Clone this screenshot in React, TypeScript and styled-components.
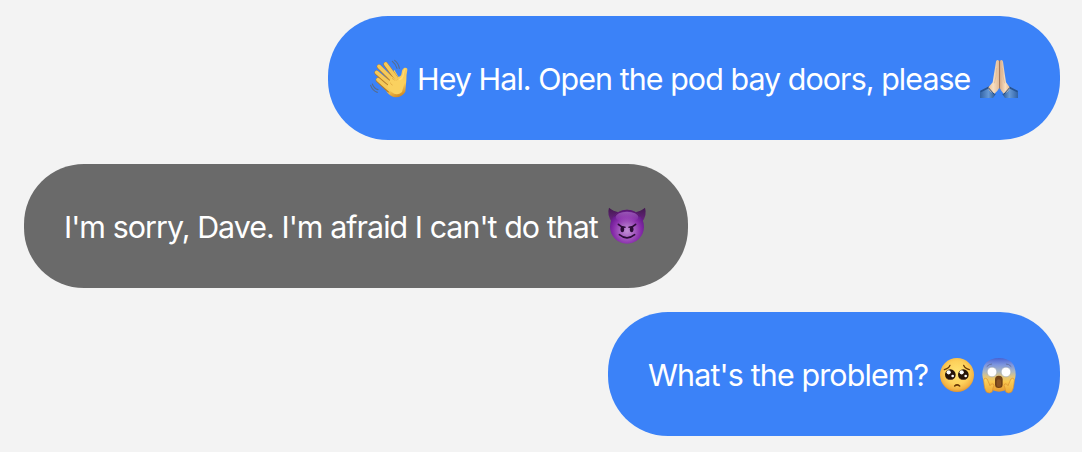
import React from "react";
import styled, { createGlobalStyle } from "styled-components";

const GlobalStyle = createGlobalStyle`
  * { box-sizing: border-box; }
  body { margin: 0; background: #f3f3f3; }
`;

const Conversation = styled.main`
  display: flex;
  flex-direction: column;
  gap: 24px;
  min-height: 452px;
  padding: 16px 22px 16px 24px;
  font-family: Inter, "Liberation Sans", sans-serif;
`;

const Bubble = styled.div<{ $sent?: boolean; $width: number }>`
  display: flex;
  align-items: center;
  justify-content: space-between;
  align-self: ${(p) => (p.$sent ? "flex-end" : "flex-start")};
  width: ${(p) => p.$width}px;
  height: 124px;
  padding: 0 40px;
  border-radius: 60px;
  background: ${(p) => (p.$sent ? "#3b82f8" : "#6a6a6a")};
  color: #fff;
`;

const Message = styled.span<{ $tracking: number }>`
  flex: 1;
  min-width: 0;
  padding-top: 2px;
  font-size: 30.4px;
  line-height: 40px;
  letter-spacing: ${(p) => p.$tracking}px;
  white-space: nowrap;
`;

const Emoji = styled.svg`
  display: block;
  flex: none;
  width: 42px;
  height: 42px;
`;

const LeadingEmoji = styled(Emoji)`
  margin-right: 7px;
`;

const Wave = () => (
  <LeadingEmoji viewBox="18 15 126 126" role="img" aria-label="waving hand">
    <defs>
      <linearGradient id="skin" gradientUnits="userSpaceOnUse" x1="60" y1="35" x2="105" y2="136">
        <stop offset="0" stopColor="#f3c557" />
        <stop offset=".72" stopColor="#fbcf5c" />
        <stop offset="1" stopColor="#d18a24" />
      </linearGradient>
    </defs>
    <g fill="none" stroke="#566c8d" strokeWidth="3.4" strokeLinecap="round">
      <path d="M91 28Q101 36 105 49M98 25Q110 34 112 49M31 96Q36 110 48 113M26 100Q32 117 46 121" />
    </g>
    <path d="M66 105L97 53L109 74Q118 74 119 62Q120 50 128 47Q137 46 136 54Q133 67 133 84L130 119Q121 135 101 136Q87 135 77 123Z" fill="url(#skin)" />
    <g fill="none" strokeLinecap="round">
      <path d="M71 37L101 78M51 44L88 82M44 62L80 94M48 84L80 114" stroke="#b97c24" strokeWidth="14" />
      <path d="M71 36L103 79M51 43L91 83M44 61L85 96M48 83L84 114" stroke="#f5c95a" strokeWidth="11" />
    </g>
    <path d="M88 74L106 87L121 73L127 94L120 120Q104 134 88 119L75 105Z" fill="#fad15f" />
    <path d="M84 92Q89 96 91 100M90 79Q96 82 99 86" fill="none" stroke="#dca03a" strokeWidth="2" />
    <path d="M129 51Q124 59 123 72Q121 79 113 83" fill="none" stroke="#ffdb74" strokeWidth="4" strokeLinecap="round" />
  </LeadingEmoji>
);

const Pray = () => (
  <Emoji viewBox="24 15 126 126" role="img" aria-label="folded hands">
    <defs>
      <linearGradient id="handLeft"><stop stopColor="#e9b887" /><stop offset=".45" stopColor="#f8dfc3" /><stop offset="1" stopColor="#e2ba95" /></linearGradient>
      <linearGradient id="handRight"><stop stopColor="#d6a983" /><stop offset=".55" stopColor="#f8dfc3" /><stop offset="1" stopColor="#e9b98a" /></linearGradient>
      <linearGradient id="cuffLeft"><stop stopColor="#3162a5" /><stop offset=".55" stopColor="#6699d6" /><stop offset="1" stopColor="#285591" /></linearGradient>
      <linearGradient id="cuffRight"><stop stopColor="#285591" /><stop offset=".45" stopColor="#6699d6" /><stop offset="1" stopColor="#3162a5" /></linearGradient>
    </defs>
    <path d="M30 117L56 103L77 127L69 138H30Z" fill="url(#cuffLeft)" />
    <path d="M144 117L118 103L97 127L105 138H144Z" fill="url(#cuffRight)" />
    <path d="M30 117L57 103L60 107L33 121Z" fill="#245293" />
    <path d="M144 117L117 103L114 107L141 121Z" fill="#245293" />
    <path d="M78 29Q79 23 84 24L88 28V107Q84 116 73 125Q59 120 54 107L68 91Q72 65 78 29Z" fill="url(#handLeft)" />
    <path d="M99 29Q98 23 93 24L89 28V107Q93 116 101 125Q115 120 120 107L108 91Q104 65 99 29Z" fill="url(#handRight)" />
    <path d="M88.5 26V109" stroke="#a87450" strokeWidth="2.6" />
    <path d="M80 48Q80 74 73 94M97 48Q97 74 104 94" fill="none" stroke="#dfb690" strokeWidth="2" />
    <path d="M54 106L73 127M120 106L101 127" stroke="#1d4580" strokeWidth="3" />
  </Emoji>
);

const Devil = () => (
  <Emoji viewBox="18 15 126 126" role="img" aria-label="smiling face with horns">
    <defs>
      <radialGradient id="devilFace" cx=".5" cy=".62" r=".56">
        <stop offset="0" stopColor="#c28fd6" /><stop offset=".36" stopColor="#a862c2" /><stop offset=".72" stopColor="#882cab" /><stop offset="1" stopColor="#661b8c" />
      </radialGradient>
      <linearGradient id="devilShine" x2="0" y2="1"><stop stopColor="#b579cb" stopOpacity=".65" /><stop offset="1" stopColor="#a75fc1" stopOpacity="0" /></linearGradient>
      <linearGradient id="horn" x2="0" y2="1"><stop stopColor="#42194e" /><stop offset="1" stopColor="#6c2485" /></linearGradient>
    </defs>
    <path d="M27 23Q38 33 61 38L36 66Q20 45 27 23ZM135 23Q124 33 101 38L126 66Q142 45 135 23Z" fill="url(#horn)" />
    <circle cx="81" cy="80" r="51" fill="url(#devilFace)" />
    <path d="M43 49Q60 31 81 31T119 49" fill="none" stroke="#5b1c6e" strokeWidth="4" />
    <ellipse cx="81" cy="51" rx="34" ry="16" fill="url(#devilShine)" />
    <ellipse cx="67" cy="88" rx="5.5" ry="9" fill="#2b0c37" />
    <ellipse cx="95" cy="88" rx="5.5" ry="9" fill="#2b0c37" />
    <g fill="none" stroke="#2b0c37" strokeLinecap="round">
      <path d="M55 73Q64 82 75 82M107 73Q98 82 87 82" strokeWidth="4.6" />
      <path d="M58 104Q81 123 104 104" strokeWidth="4.8" />
    </g>
  </Emoji>
);

const YellowFace = () => (
  <radialGradient id="yellowFace" cx=".5" cy=".43" r=".58">
    <stop offset="0" stopColor="#ffe573" /><stop offset=".6" stopColor="#fdd05a" /><stop offset=".85" stopColor="#f3b344" /><stop offset="1" stopColor="#dd902f" />
  </radialGradient>
);

const Pleading = () => (
  <Emoji viewBox="18 15 126 126" role="img" aria-label="pleading face">
    <defs><YellowFace /></defs>
    <circle cx="81" cy="81" r="51" fill="url(#yellowFace)" />
    <circle cx="61" cy="80" r="16" fill="#261409" /><circle cx="100" cy="80" r="16" fill="#261409" />
    <path d="M50 90Q61 99 72 90Q69 96 61 96T50 90ZM89 90Q100 99 111 90Q108 96 100 96T89 90Z" fill="#a77a5b" />
    <g fill="#fff"><circle cx="56" cy="73" r="6.4" /><circle cx="95" cy="73" r="6.4" /><circle cx="68" cy="84" r="4" /><circle cx="107" cy="84" r="4" /></g>
    <g fill="none" stroke="#673707" strokeWidth="3.8" strokeLinecap="round">
      <path d="M43 65Q56 62 60 52M118 65Q105 62 101 52" />
      <path d="M74 114Q81 107 89 114" strokeWidth="4.6" />
    </g>
  </Emoji>
);

const Scream = () => (
  <Emoji viewBox="144 15 126 126" role="img" aria-label="face screaming in fear">
    <defs>
      <linearGradient id="fear" x2="0" y2="1">
        <stop stopColor="#4862d2" /><stop offset=".2" stopColor="#7d95df" /><stop offset=".4" stopColor="#aab7c1" /><stop offset=".55" stopColor="#dfc57e" /><stop offset=".7" stopColor="#fac94f" /><stop offset="1" stopColor="#e4962e" />
      </linearGradient>
      <linearGradient id="palm" x2="0" y2="1"><stop stopColor="#ffd660" /><stop offset="1" stopColor="#eda935" /></linearGradient>
    </defs>
    <path d="M157 80Q157 31 207 30Q257 31 257 80Q256 103 239 118Q225 131 207 131Q189 131 175 118Q158 103 157 80Z" fill="url(#fear)" />
    <circle cx="186" cy="72" r="14.5" fill="#fff" stroke="#929da8" strokeWidth="1.5" />
    <circle cx="228" cy="72" r="14.5" fill="#fff" stroke="#929da8" strokeWidth="1.5" />
    <path d="M171 55Q177 48 185 48M229 48Q237 48 243 55" fill="none" stroke="#6472a1" strokeWidth="3" strokeLinecap="round" />
    <rect x="195" y="83" width="23" height="37" rx="11.5" fill="#704116" />
    <rect x="200" y="94" width="13" height="23" rx="6.5" fill="#875224" />
    <path d="M161 98Q161 90 167 91Q172 91 174 99L180 113Q185 105 190 108Q194 112 189 120L187 131Q179 139 169 132Q162 122 161 98Z" fill="url(#palm)" stroke="#d78b2d" strokeWidth="1.8" />
    <path d="M253 98Q253 90 247 91Q242 91 240 99L234 113Q229 105 224 108Q220 112 225 120L227 131Q235 139 245 132Q252 122 253 98Z" fill="url(#palm)" stroke="#d78b2d" strokeWidth="1.8" />
  </Emoji>
);

export default function App() {
  return (
    <>
      <GlobalStyle />
      <Conversation>
        <Bubble $sent $width={732}>
          <Wave />
          <Message $tracking={-0.93}>Hey Hal. Open the pod bay doors, please</Message>
          <Pray />
        </Bubble>
        <Bubble $width={664}>
          <Message $tracking={-0.95}>I'm sorry, Dave. I'm afraid I can't do that</Message>
          <Devil />
        </Bubble>
        <Bubble $sent $width={452}>
          <Message $tracking={-0.85}>What's the problem?</Message>
          <Pleading />
          <Scream />
        </Bubble>
      </Conversation>
    </>
  );
}
